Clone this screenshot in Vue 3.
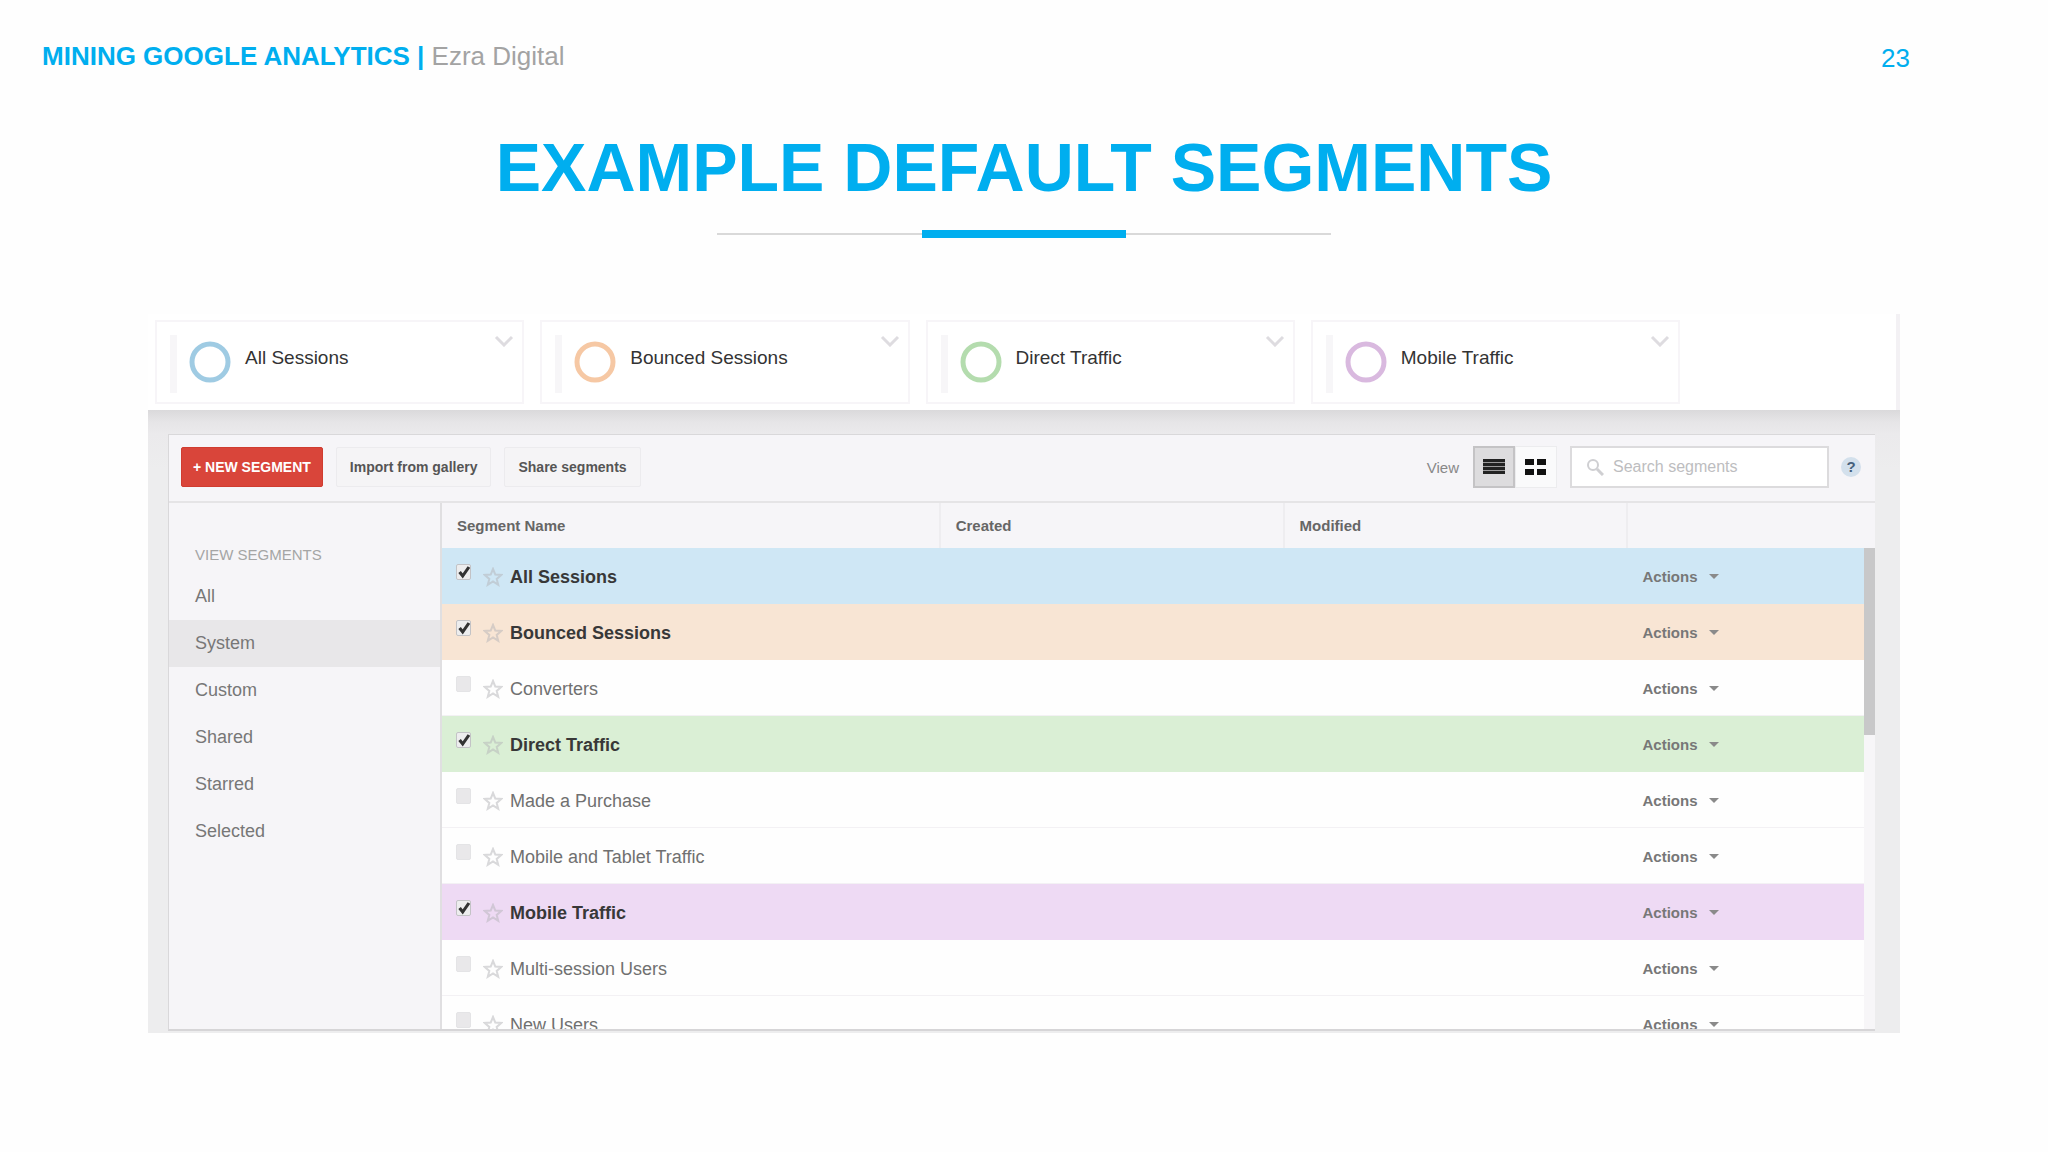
<script setup>
import { ref, computed } from 'vue'

const cards = [
  { label: 'All Sessions', color: '#9fcbe3' },
  { label: 'Bounced Sessions', color: '#f6c8a4' },
  { label: 'Direct Traffic', color: '#b4dcae' },
  { label: 'Mobile Traffic', color: '#d9b9df' },
]

const filters = ['All', 'System', 'Custom', 'Shared', 'Starred', 'Selected']
const activeFilter = ref('System')

const view = ref('list')
const search = ref('')

const segments = ref([
  { name: 'All Sessions', checked: true, tone: 'blue' },
  { name: 'Bounced Sessions', checked: true, tone: 'orange' },
  { name: 'Converters', checked: false, tone: 'blue' },
  { name: 'Direct Traffic', checked: true, tone: 'green' },
  { name: 'Made a Purchase', checked: false, tone: 'blue' },
  { name: 'Mobile and Tablet Traffic', checked: false, tone: 'blue' },
  { name: 'Mobile Traffic', checked: true, tone: 'purple' },
  { name: 'Multi-session Users', checked: false, tone: 'blue' },
  { name: 'New Users', checked: false, tone: 'blue' },
])

const visibleSegments = computed(() => {
  const q = search.value.trim().toLowerCase()
  return segments.value.filter((s) => s.name.toLowerCase().includes(q))
})
</script>

<template>
  <div class="slide">
    <header class="slide-header">
      <p class="deck"><strong>MINING GOOGLE ANALYTICS |</strong> Ezra Digital</p>
      <p class="page-number">23</p>
    </header>

    <h1 class="title">EXAMPLE DEFAULT SEGMENTS</h1>
    <div class="rule"><span class="rule-accent"></span></div>

    <main class="analytics">
      <section class="cards">
        <article v-for="card in cards" :key="card.label" class="card">
          <span class="grip"></span>
          <svg class="ring" viewBox="0 0 42 42">
            <circle cx="21" cy="21" r="18" fill="none" :stroke="card.color" stroke-width="5" />
          </svg>
          <span class="card-label">{{ card.label }}</span>
          <button class="card-menu" type="button" :aria-label="card.label">
            <svg viewBox="0 0 20 12"><path d="M2 2l8 8 8-8" fill="none" stroke="#dedce0" stroke-width="3" /></svg>
          </button>
        </article>
      </section>

      <section class="panel-wrap">
        <div class="panel">
          <div class="toolbar">
            <button class="btn btn-primary" type="button">+ NEW SEGMENT</button>
            <button class="btn" type="button">Import from gallery</button>
            <button class="btn" type="button">Share segments</button>

            <span class="view-label">View</span>
            <div class="toggle">
              <button type="button" :class="{ on: view === 'list' }" aria-label="List" @click="view = 'list'">
                <svg width="22" height="18" viewBox="0 0 22 18">
                  <path d="M0 1h22v3H0zM0 5h22v3H0zM0 9h22v3H0zM0 13h22v3H0z" fill="#222" />
                  <path d="M0 1h22v15H0z" fill="#222" opacity="0.35" />
                </svg>
              </button>
              <button type="button" :class="{ on: view === 'grid' }" aria-label="Grid" @click="view = 'grid'">
                <svg width="22" height="18" viewBox="0 0 22 18">
                  <path d="M0 1h9v6H0zM12 1h9v6h-9zM0 11h9v6H0zM12 11h9v6h-9z" fill="#111" />
                </svg>
              </button>
            </div>

            <label class="search">
              <svg width="18" height="18" viewBox="0 0 18 18" fill="none" stroke="#cfcfd2">
                <circle cx="7" cy="7" r="5" stroke-width="2" />
                <path d="M11 11l6 6" stroke-width="3" />
              </svg>
              <input v-model="search" type="text" placeholder="Search segments" aria-label="Search segments" />
            </label>
            <button class="help" type="button">?</button>
          </div>

          <div class="content">
            <nav class="sidebar">
              <h2>VIEW SEGMENTS</h2>
              <a
                v-for="f in filters"
                :key="f"
                href="#"
                :class="{ active: f === activeFilter }"
                @click.prevent="activeFilter = f"
              >{{ f }}</a>
            </nav>

            <div class="list">
              <table>
                <colgroup>
                  <col class="col-name" />
                  <col class="col-date" />
                  <col class="col-date" />
                  <col />
                </colgroup>
                <thead>
                  <tr>
                    <th>Segment Name</th>
                    <th>Created</th>
                    <th>Modified</th>
                    <th></th>
                  </tr>
                </thead>
                <tbody>
                  <tr v-for="s in visibleSegments" :key="s.name" :class="s.checked ? ['selected', s.tone] : null">
                    <td>
                      <label class="name">
                        <input v-model="s.checked" type="checkbox" />
                        <svg class="star" viewBox="0 0 20 20">
                          <path
                            d="M10 2l2.3 5.6 6 .4-4.6 3.9 1.5 5.9L10 14.5l-5.2 3.3 1.5-5.9L1.7 8l6-.4z"
                            fill="none"
                            stroke="#b4b4b8"
                            stroke-opacity="0.5"
                            stroke-width="2"
                          />
                        </svg>
                        <span>{{ s.name }}</span>
                      </label>
                    </td>
                    <td></td>
                    <td></td>
                    <td><button class="actions" type="button">Actions <i class="caret"></i></button></td>
                  </tr>
                </tbody>
              </table>
              <div class="scrollbar"><span></span></div>
            </div>
          </div>
        </div>
      </section>
    </main>
  </div>
</template>

<style>
body {
  background: #fefefe;
}
</style>

<style scoped>
.slide,
.slide * {
  box-sizing: border-box;
}

.slide {
  font-family: 'Liberation Sans', Arial, sans-serif;
  color: #333;
}

button {
  font-family: inherit;
  cursor: pointer;
}

.slide-header {
  display: flex;
  justify-content: space-between;
  align-items: flex-end;
  padding: 40px 138px 0 42px;
  font-size: 26px;
  line-height: 32px;
  color: #a3a3a3;
}

.slide-header p {
  margin: 0;
}

.deck {
  padding-bottom: 2px;
}

.deck strong,
.page-number {
  color: #00aeef;
}

.title {
  margin: 53px 0 0;
  font-size: 68px;
  line-height: 80px;
  text-align: center;
  color: #00aeef;
}

.rule {
  display: flex;
  align-items: center;
  justify-content: center;
  width: 30%;
  height: 8px;
  margin: 23px auto 0;
  background: linear-gradient(#d9d9d9, #d9d9d9) center / 100% 2px no-repeat;
}

.rule-accent {
  width: 33.3%;
  height: 8px;
  background: #00aeef;
}

.analytics {
  margin: 76px 148px 0;
}

/* segment cards */
.cards {
  display: flex;
  gap: 16px;
  height: 96px;
  padding: 6px 216px 6px 7px;
  background: #fff;
  border-right: 4px solid #f3f1f4;
}

.card {
  flex: 1;
  display: flex;
  padding: 13px 8px 0 13px;
  border: 2px solid #f7f5f8;
  background: #fff;
}

.grip {
  width: 7px;
  height: 58px;
  background: #f7f6f8;
}

.ring {
  width: 42px;
  height: 42px;
  margin: 6px 14px 0 12px;
}

.card-label {
  flex: 1;
  padding-top: 11px;
  font-size: 19px;
  line-height: 24px;
}

.card-menu {
  align-self: flex-start;
  padding: 0;
  border: none;
  background: none;
}

.card-menu svg {
  display: block;
  width: 20px;
  height: 12px;
}

/* panel */
.panel-wrap {
  padding: 24px 25px 2px 20px;
  background: linear-gradient(#dad9db, #e6e5e7 12px, #ebeaec 24px, #ededee 60px);
}

.panel {
  border: 1px solid #d9d8da;
  border-right: none;
  border-bottom: 2px solid #d6d5d7;
  background: #f6f5f8;
}

.toolbar {
  display: flex;
  align-items: center;
  height: 68px;
  padding: 0 14px 2px 12px;
  border-bottom: 2px solid #e5e4e6;
}

.btn {
  height: 40px;
  margin-right: 13px;
  padding: 0 13px;
  border: 1px solid #ecebee;
  border-radius: 2px;
  background: #f5f4f6;
  color: #555;
  font-size: 14px;
  font-weight: bold;
}

.btn-primary {
  padding: 0 11px;
  border-color: #d03c30;
  background: #d9453a;
  color: #fff;
}

.view-label {
  margin-left: auto;
  margin-right: 14px;
  font-size: 15px;
  color: #888;
}

.toggle {
  display: flex;
  margin-right: 13px;
}

.toggle button {
  display: flex;
  align-items: center;
  justify-content: center;
  width: 42px;
  height: 42px;
  padding: 0;
  border: 1px solid #ececee;
  background: #fafafb;
}

.toggle .on {
  border: 2px solid #c4c3c5;
  background: #dddcde;
}

.search {
  display: flex;
  align-items: center;
  gap: 9px;
  width: 259px;
  height: 42px;
  padding: 0 14px;
  border: 2px solid #dcdbdd;
  background: #fff;
}

.search input {
  flex: 1;
  min-width: 0;
  padding: 0;
  border: none;
  outline: none;
  background: none;
  font-family: inherit;
  font-size: 16px;
  color: #555;
}

.search input::placeholder {
  color: #bdbdc0;
}

.help {
  width: 20px;
  height: 20px;
  margin-left: 12px;
  padding: 0;
  border: none;
  border-radius: 50%;
  background: #d3e0ec;
  color: #46607c;
  font-size: 15px;
  font-weight: bold;
  line-height: 20px;
}

.content {
  display: flex;
  height: 526px;
}

.sidebar {
  width: 273px;
  flex-shrink: 0;
  padding-top: 40px;
  border-right: 2px solid #e0dfe1;
}

.sidebar h2 {
  margin: 0;
  padding: 0 26px;
  font-size: 15px;
  font-weight: normal;
  line-height: 24px;
  color: #a5a5a5;
}

.sidebar a {
  display: block;
  padding: 0 26px;
  font-size: 18px;
  line-height: 47px;
  color: #777;
  text-decoration: none;
}

.sidebar h2 + a {
  margin-top: 6px;
}

.sidebar .active {
  background: #e8e7e9;
}

/* segment table */
.list {
  position: relative;
  flex: 1;
  overflow: hidden;
}

table {
  width: 100%;
  table-layout: fixed;
  border-collapse: separate;
  border-spacing: 0;
}

.col-name {
  width: 34.8%;
}

.col-date {
  width: 24%;
}

th {
  height: 45px;
  padding: 0 15px;
  border-right: 2px solid #eeedf0;
  font-size: 15px;
  text-align: left;
  color: #666;
}

th:last-child {
  border-right: none;
}

td {
  height: 56px;
  padding: 2px 15px 0 14px;
  border-bottom: 1px solid #f3f1f4;
  background: #fefefe;
  color: #707070;
}

.selected td {
  border-bottom-color: transparent;
}

.blue td {
  background: #cfe7f5;
}

.orange td {
  background: #f8e5d4;
}

.green td {
  background: #daefd5;
}

.purple td {
  background: #eedaf4;
}

.name {
  display: flex;
  align-items: center;
  font-size: 18px;
  line-height: 24px;
}

.selected .name {
  font-weight: bold;
  color: #383838;
}

.name input {
  appearance: none;
  width: 15px;
  height: 16px;
  margin: 0 12px 10px 0;
  border: 1px solid #e4e4e6;
  border-radius: 2px;
  background: #e9e8ea;
}

.name input:checked {
  border-color: #c3c3c6;
  background: #ededee
    url("data:image/svg+xml,%3Csvg xmlns='http://www.w3.org/2000/svg' viewBox='0 0 14 14'%3E%3Cpath d='M3 7l3 4 6-9' fill='none' stroke='%23333' stroke-width='3'/%3E%3C/svg%3E")
    center / 14px 14px no-repeat;
}

.star {
  width: 20px;
  height: 20px;
  margin-right: 7px;
}

.actions {
  display: flex;
  align-items: center;
  gap: 11px;
  padding: 0;
  border: none;
  background: none;
  font-size: 15px;
  font-weight: bold;
  color: #777;
}

.caret {
  border: 5px solid transparent;
  border-top-color: #8a8a8a;
  border-bottom: none;
}

.scrollbar {
  position: absolute;
  top: 45px;
  right: 0;
  bottom: 0;
  width: 11px;
  background: #f7f6f8;
}

.scrollbar span {
  display: block;
  height: 187px;
  background: #c8c8c9;
}
</style>
